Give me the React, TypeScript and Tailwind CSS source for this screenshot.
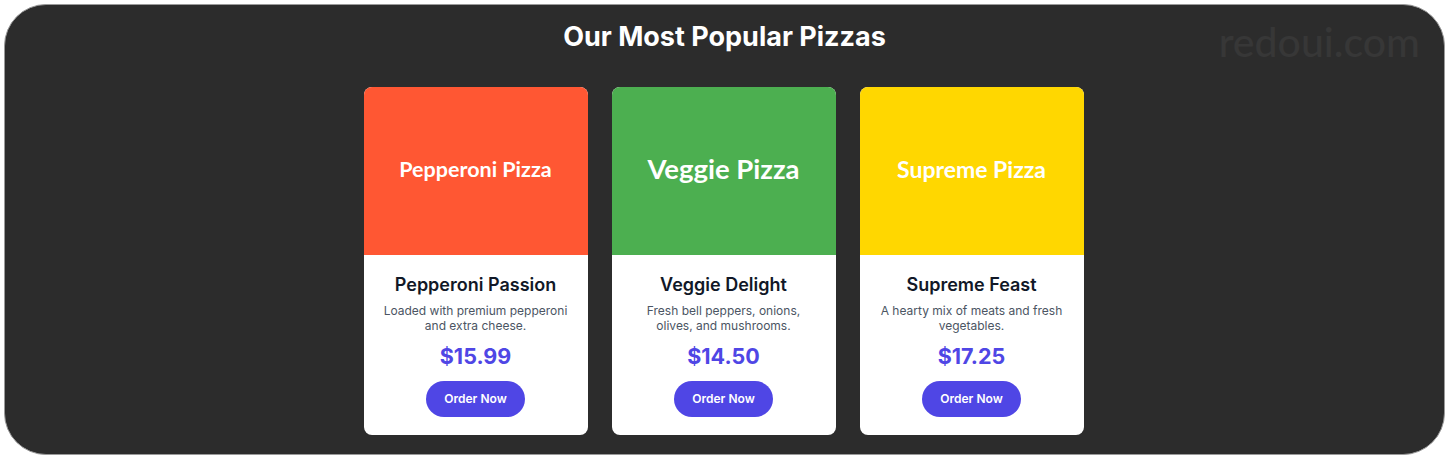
import React from "react";

type Pizza = {
  label: string;
  labelSize: string;
  color: string;
  name: string;
  desc: string[];
  price: string;
};

const pizzas: Pizza[] = [
  {
    label: "Pepperoni Pizza",
    labelSize: "text-[21.5px]",
    color: "bg-[#ff5733]",
    name: "Pepperoni Passion",
    desc: ["Loaded with premium pepperoni", "and extra cheese."],
    price: "$15.99",
  },
  {
    label: "Veggie Pizza",
    labelSize: "text-[27.5px]",
    color: "bg-[#4caf50]",
    name: "Veggie Delight",
    desc: ["Fresh bell peppers, onions,", "olives, and mushrooms."],
    price: "$14.50",
  },
  {
    label: "Supreme Pizza",
    labelSize: "text-[23px]",
    color: "bg-[#ffd700]",
    name: "Supreme Feast",
    desc: ["A hearty mix of meats and fresh", "vegetables."],
    price: "$17.25",
  },
];

const PizzaCard: React.FC<{ pizza: Pizza }> = ({ pizza }) => {
  return (
    <div className="w-[224px] bg-white rounded-lg overflow-hidden flex flex-col">
      <div
        className={`${pizza.color} h-[168px] flex items-center justify-center pb-1`}
      >
        <span
          className={`${pizza.labelSize} text-white font-bold font-['Lato',sans-serif]`}
        >
          {pizza.label}
        </span>
      </div>
      <div className="flex flex-col items-center pt-4 pb-[18px] px-3 font-['Inter',sans-serif]">
        <h3 className="text-lg leading-7 font-semibold text-[#111827]">
          {pizza.name}
        </h3>
        <p className="mt-1 text-xs leading-[15px] text-[#4b5563] text-center">
          {pizza.desc[0]}
          <br />
          {pizza.desc[1]}
        </p>
        <p className="mt-[7px] text-[21.5px] leading-8 font-bold text-[#4f46e5]">
          {pizza.price}
        </p>
        <button className="mt-[9px] h-9 px-[18px] rounded-full bg-[#4f46e5] text-white text-xs font-semibold">
          Order Now
        </button>
      </div>
    </div>
  );
};

export default function App() {
  return (
    <div className="bg-white h-[459px] p-1">
      <div className="relative h-[451px] rounded-[42px] bg-[#2c2c2c] border border-[#9a9a9a] flex flex-col items-center font-['Inter',sans-serif]">
        <span className="absolute right-[24px] top-[13px] text-[41px] leading-[48px] text-[#373737] font-['Lato',sans-serif] font-medium">
          redoui.com
        </span>
        <h2 className="mt-[14px] text-[27px] leading-9 font-bold text-white">
          Our Most Popular Pizzas
        </h2>
        <div className="mt-[32px] flex gap-6 -translate-x-px">
          {pizzas.map((p) => (
            <PizzaCard key={p.name} pizza={p} />
          ))}
        </div>
      </div>
    </div>
  );
}
